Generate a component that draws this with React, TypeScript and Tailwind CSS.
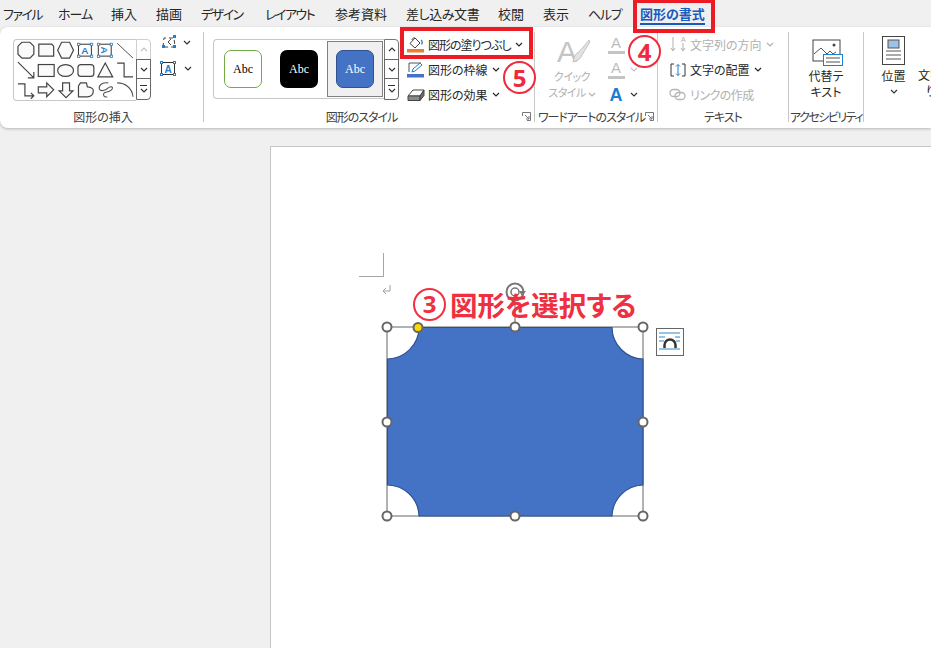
import type { ReactNode } from 'react';

const tabs = [
  { label: 'ファイル', className: 'w-[55px] tracking-[-1.5px]' },
  { label: 'ホーム', className: 'w-[53px] tracking-[-1px]' },
  { label: '挿入', className: 'w-[45px]' },
  { label: '描画', className: 'w-[45px]' },
  { label: 'デザイン', className: 'w-[64px] tracking-[-1.5px]' },
  { label: 'レイアウト', className: 'w-[70px] tracking-[-1.5px]' },
  { label: '参考資料', className: 'w-[71px]' },
  { label: '差し込み文書', className: 'w-[92px] tracking-[-0.4px]' },
  { label: '校閲', className: 'w-[45px]' },
  { label: '表示', className: 'w-[45px]' },
  { label: 'ヘルプ', className: 'w-[52px] tracking-[-1.3px]' },
];

function Chevron({ className = '' }: { className?: string }) {
  return (
    <svg width="8" height="5" viewBox="0 0 8 5" className={className}>
      <path d="M1 1l3 3 3-3" fill="none" stroke="currentColor" strokeWidth="1.2" />
    </svg>
  );
}

function GroupLabel({ children, launcher, className = '' }: { children: ReactNode; launcher?: boolean; className?: string }) {
  return (
    <div className="relative -mb-[4px] mt-auto h-[18px] shrink-0 whitespace-nowrap text-center text-[12px] leading-[18px] text-[#404040]">
      <div className={className}>{children}</div>
      {launcher && (
        <svg width="9" height="9" viewBox="0 0 9 9" className="absolute bottom-[5px] right-[3px] text-[#777777]">
          <path d="M.5 4V.5H8.5V8.5H5M3 3l4 4M7 4v3H4" fill="none" stroke="currentColor" />
        </svg>
      )}
    </div>
  );
}

function ShapeGallery() {
  const s = { fill: '#fafafa', stroke: '#444444', strokeWidth: 1.2 };
  const handle = '#1e7fd0';
  const boxes = [
    [78, 44, 13, 12],
    [98, 44, 13, 12],
  ];
  return (
    <svg width="123" height="60" viewBox="13 40 123 60">
      <polygon points="21,42 29,42 33,46 33,54 29,58 21,58 17,54 17,46" {...s} />
      <path d="M38 44h13l2 2v10H38z" {...s} />
      <polygon points="61,42 69,42 73,50 69,58 61,58 57,50" {...s} />
      {boxes.map(([x, y, w, h]) => (
        <g key={x}>
          <rect x={x} y={y} width={w} height={h} fill="none" stroke="#333333" />
          {[[x, y], [x + w, y], [x, y + h], [x + w, y + h]].map(([a, b]) => (
            <rect key={`${a}-${b}`} x={a - 1} y={b - 1} width="2.4" height="2.4" fill="white" stroke={handle} strokeWidth="0.8" />
          ))}
        </g>
      ))}
      <text x="84.5" y="54" textAnchor="middle" fontSize="10" fontWeight="700" fill={handle} fontFamily="Liberation Sans">A</text>
      <text x="105" y="54" textAnchor="middle" fontSize="10" fontWeight="700" fill={handle} fontFamily="Liberation Sans" transform="rotate(90 105 50)">A</text>
      <path d="M117 43l16 15" fill="none" stroke="#555555" />

      <path d="M17 62l16 16M33 72v6h-6" fill="none" stroke="#444444" strokeWidth="1.2" />
      <rect x="37.500" y="64.500" width="16" height="12" {...s} />
      <ellipse cx="65" cy="70.500" rx="8" ry="6" {...s} />
      <rect x="77.500" y="64.500" width="16" height="12" rx="3" {...s} />
      <polygon points="105,63 112.500,77 97.500,77" {...s} />
      <path d="M117 63h7v14h9" fill="none" stroke="#444444" strokeWidth="1.2" />

      <path d="M17 84h7v12h9M30 93l3 3-3 3" fill="none" stroke="#444444" strokeWidth="1.2" />
      <polygon points="37.500,87 46,87 46,83 53,90 46,97 46,93 37.500,93" {...s} />
      <polygon points="62,83 69,83 69,91 72.500,91 65.500,98 58.500,91 62,91" {...s} />
      <path d="M80 83h6l1 4c2 0 6 1 6 4 0 4-3 6-6 6h-9V86z" {...s} />
      <path d="M108 83c-5-1-10 2-9 6 1 3 6 2 9-1 3-2 5-1 4 1-1 3-6 3-8 4-2 2 0 5 3 4" fill="none" stroke="#555555" strokeWidth="1.1" />
      <path d="M117 83c8 0 15 5 16 14" fill="none" stroke="#555555" strokeWidth="1.1" />
    </svg>
  );
}

function Scroller({ upDisabled }: { upDisabled?: boolean }) {
  return (
    <div className="flex w-[15px] shrink-0 flex-col text-[#333333]">
      <div className={`flex h-[21px] items-center justify-center rounded-tr-[4px] border ${upDisabled ? 'border-[#cfcfcf] text-[#c4c4c4]' : 'border-[#777777]'}`}>
        <Chevron className="rotate-180" />
      </div>
      <div className="-mt-px flex h-[20px] items-center justify-center border border-[#666666]">
        <Chevron />
      </div>
      <div className="-mt-px flex h-[22px] flex-col items-center justify-center rounded-br-[4px] border border-[#666666]">
        <div className="mb-[2px] h-px w-[7px] bg-[#333333]" />
        <Chevron />
      </div>
    </div>
  );
}

function StyleCard({ className }: { className: string }) {
  return (
    <div className={`flex h-[38px] w-[38px] items-center justify-center rounded-[7px] font-['Liberation_Serif',serif] text-[12px] ${className}`}>
      Abc
    </div>
  );
}

function CommandRow({ icon, label, muted, labelClass = '', noChevron }: { icon: ReactNode; label: string; muted?: boolean; labelClass?: string; noChevron?: boolean }) {
  return (
    <div className={`flex h-[25px] shrink-0 items-center whitespace-nowrap text-[12px] ${muted ? 'text-[#b0b0b0]' : 'text-[#262626]'}`}>
      <div className="mr-[3px] flex w-[19px] justify-center">{icon}</div>
      <span className={labelClass}>{label}</span>
      {!noChevron && <Chevron className="ml-[4px]" />}
    </div>
  );
}

function LetterIcon({ kind }: { kind: 'plain' | 'outline' | 'blue' }) {
  return (
    <div className="flex h-[25px] items-center">
      <div className="flex w-[18px] flex-col items-center">
        <span
          className={`font-['Liberation_Sans',sans-serif] leading-[14px] ${
            kind === 'blue' ? 'text-[18px] font-bold text-[#1e7fd0]' : 'text-[15px] text-[#bdbdbd]'
          }`}
        >
          A
        </span>
        {kind !== 'blue' && <div className="mt-[1px] h-[3px] w-[17px] bg-[#c4c4c4]" />}
      </div>
      <Chevron className={`ml-[5px] ${kind === 'blue' ? 'text-[#333333]' : 'text-[#c4c4c4]'}`} />
    </div>
  );
}

function Ring({ digit, className }: { digit: string; className: string }) {
  return (
    <div
      className={`absolute flex h-[33px] w-[33px] items-center justify-center rounded-full border-[2.5px] border-[#ee2a3c] bg-white font-['Noto_Sans',sans-serif] text-[24px] font-bold leading-none text-[#ee2a3c] ${className}`}
    >
      {digit}
    </div>
  );
}

function SelectedShape() {
  const handles = [
    [387, 327],
    [515, 327],
    [643, 327],
    [387, 422],
    [643, 422],
    [387, 516],
    [515, 516],
    [643, 516],
  ];
  return (
    <svg width="330" height="250" viewBox="359 277 330 250">
      <path d="M390 285v6h-6M386 288l-3 3 3 3" fill="none" stroke="#a0a0a0" />
      <circle cx="515" cy="292" r="8.500" fill="none" stroke="#777777" strokeWidth="2" />
      <circle cx="515" cy="292" r="4" fill="none" stroke="#777777" strokeWidth="1.500" />
      <path d="M519 291h7l-4 5z" fill="#777777" />
      <path d="M515 300v27" stroke="#666666" />
      <rect x="387" y="327" width="256" height="189" fill="white" stroke="#666666" />
      <path
        d="M419 327.500H612A32 32 0 0 0 643 359V485A32 32 0 0 0 612 516H419A32 32 0 0 0 387.500 485V359A32 32 0 0 0 419 327.500Z"
        fill="#4472c4"
        stroke="#2f528f"
        strokeWidth="1.200"
      />
      {handles.map(([x, y]) => (
        <circle key={`${x}-${y}`} cx={x} cy={y} r="4.500" fill="white" stroke="#666666" strokeWidth="2" />
      ))}
      <circle cx="418" cy="327.500" r="4.500" fill="#ffd800" stroke="#666666" strokeWidth="2" />
      <rect x="656.500" y="328.500" width="27" height="27" fill="white" stroke="#666666" />
      <path d="M659 333h21M659 337h6M675 337h5M659 341h5M676 341h4M659 349h21" stroke="#2e86c9" />
      <path d="M664.500 348v-3a5.500 5.500 0 0 1 11 0v3" fill="none" stroke="#333333" strokeWidth="2.500" />
    </svg>
  );
}

export default function App() {
  return (
    <div className="relative flex h-[648px] w-[931px] flex-col overflow-hidden bg-[#f0f0f0] font-['Noto_Sans_CJK_JP','Noto_Sans',sans-serif] [font-feature-settings:'palt']">
      {/* Tabs */}
      <div className="flex h-[27px] shrink-0 items-center whitespace-nowrap pl-[3px] text-[13px] text-[#262626]">
        {tabs.map((t) => (
          <span key={t.label} className={t.className}>
            {t.label}
          </span>
        ))}
        <span className="relative font-bold text-[#185abd]">
          図形の書式
          <span className="absolute inset-x-0 bottom-[-2px] h-[2px] bg-[#185abd]" />
        </span>
      </div>

      {/* Ribbon */}
      <div className="flex h-[101px] shrink-0 items-start rounded-l-[8px] bg-white pt-[5px] shadow-[0_1px_3px_rgba(0,0,0,0.25)]">
        {/* 図形の挿入 */}
        <div className="flex h-[90px] w-[204px] shrink-0 flex-col border-r border-[#c8c8c8] pl-[13px]">
          <div className="mt-[7px] flex items-start">
            <div className="flex h-[62px] w-[123px] items-center rounded-l-[4px] border-y border-l border-[#c8c8c8]">
              <ShapeGallery />
            </div>
            <Scroller upDisabled />
            <div className="ml-[9px] mt-[-5px] flex flex-col gap-[10px] text-[#333333]">
              <div className="flex h-[16px] items-center gap-[6px]">
                <svg width="17" height="14" viewBox="0 0 17 14">
                  <path d="M3 12l1-9h10l1 9z" fill="none" stroke="#444444" strokeDasharray="4 3" />
                  <path d="M11 4l-3 3 3 3" fill="none" stroke="#444444" />
                  <rect x="2" y="10" width="3" height="3" fill="#1e7fd0" />
                  <rect x="13" y="0" width="3" height="3" fill="#1e7fd0" />
                  <rect x="13" y="10" width="3" height="3" fill="#1e7fd0" />
                </svg>
                <Chevron />
              </div>
              <div className="flex h-[16px] items-center gap-[8px]">
                <svg width="16" height="15" viewBox="0 0 16 15">
                  <rect x="1.500" y="1.500" width="13" height="12" fill="none" stroke="#333333" />
                  <text x="8" y="12" textAnchor="middle" fontSize="10" fontWeight="700" fill="#1e7fd0" fontFamily="Liberation Sans">A</text>
                  {[[0, 0], [13, 0], [0, 12], [13, 12]].map(([x, y]) => (
                    <rect key={`${x}-${y}`} x={x + 0.5} y={y + 0.5} width="2" height="2" fill="white" stroke="#1e7fd0" />
                  ))}
                </svg>
                <Chevron />
              </div>
            </div>
          </div>
          <GroupLabel className="pr-[10px]">図形の挿入</GroupLabel>
        </div>

        {/* 図形のスタイル */}
        <div className="flex h-[90px] w-[331px] shrink-0 flex-col border-r border-[#c8c8c8] pl-[9px]">
          <div className="flex items-start">
            <div className="mt-[7px] flex items-start">
              <div className="flex h-[60px] w-[171px] items-center gap-[18px] rounded-l-[4px] border-y border-l border-[#c8c8c8] pl-[10px]">
                <StyleCard className="border border-[#70ad47] bg-white text-black" />
                <StyleCard className="bg-black text-white" />
                <div className="-ml-[9px] flex h-[56px] w-[56px] items-center justify-center border border-[#808080] bg-[#f0f0f0]">
                  <StyleCard className="border border-[#2f528f] bg-[#4472c4] text-white" />
                </div>
              </div>
              <Scroller />
            </div>
            <div className="ml-[7px] flex flex-col">
              <CommandRow
                label="図形の塗りつぶし"
                labelClass="tracking-[-1px]"
                icon={
                  <svg width="17" height="16" viewBox="0 0 17 16">
                    <path d="M3 6.500L8 1l5 5-5 5z" fill="white" stroke="#444444" />
                    <path d="M5 3c0-2 3-3 4-1" fill="none" stroke="#444444" />
                    <path d="M14 3c1.500 1 1.500 3 .5 4.500" fill="none" stroke="#1e7fd0" strokeWidth="1.300" />
                    <rect y="12" width="17" height="3.500" fill="#ed7d31" />
                  </svg>
                }
              />
              <CommandRow
                label="図形の枠線"
                icon={
                  <svg width="17" height="16" viewBox="0 0 17 16">
                    <path d="M2 10V1h12" fill="none" stroke="#555555" />
                    <path d="M5 10l1-3 7-6 2 2-7 6z" fill="white" stroke="#1e7fd0" />
                    <rect y="12" width="17" height="3.500" fill="#4472c4" />
                  </svg>
                }
              />
              <CommandRow
                label="図形の効果"
                icon={
                  <svg width="18" height="14" viewBox="0 0 18 14">
                    <path d="M1 8l5-6h11l-4 6z" fill="white" stroke="#444444" />
                    <path d="M1 8v4.500h12V8z" fill="#8a8a8a" stroke="#444444" />
                    <path d="M13 8v4.500l4-5V2z" fill="#6f6f6f" stroke="#444444" />
                  </svg>
                }
              />
            </div>
          </div>
          <GroupLabel launcher className="pr-[24px] tracking-[-1px]">図形のスタイル</GroupLabel>
        </div>

        {/* ワードアートのスタイル */}
        <div className="flex h-[90px] w-[123px] shrink-0 flex-col border-r border-[#c8c8c8]">
          <div className="flex items-start pl-[10px] text-[#b0b0b0]">
            <div className="flex w-[54px] flex-col items-center">
              <svg width="38" height="30" viewBox="0 0 38 30" className="mt-[5px]">
                <text x="14" y="25" textAnchor="middle" fontSize="30" fill="#c4c4c4" fontFamily="Liberation Sans">A</text>
                <path d="M36 3L26 15c-3 1-5 4-6 10 4-1 8-3 9-7L37 5z" fill="#e2e2e2" stroke="#b8b8b8" strokeWidth="0.8" />
              </svg>
              <div className="mt-[1px] text-center text-[11px] leading-[16px] tracking-[-0.5px]">
                クイック
                <br />
                スタイル <Chevron className="inline align-middle" />
              </div>
            </div>
            <div className="ml-[8px] flex flex-col">
              <LetterIcon kind="plain" />
              <LetterIcon kind="outline" />
              <LetterIcon kind="blue" />
            </div>
          </div>
          <GroupLabel launcher className="pl-[3px] pr-[18px] tracking-[-1px]">ワードアートのスタイル</GroupLabel>
        </div>

        {/* テキスト */}
        <div className="flex h-[90px] w-[131px] shrink-0 flex-col border-r border-[#c8c8c8] pl-[10px]">
          <CommandRow
            muted
            label="文字列の方向"
            icon={
              <svg width="16" height="17" viewBox="0 0 16 17">
                <path d="M3 1v13M1 12l2 3 2-3M13 7v7M11 12l2 3 2-3" fill="none" stroke="#b0b0b0" />
                <text x="11" y="6" fontSize="7" fill="#b0b0b0" fontFamily="Liberation Sans">A</text>
              </svg>
            }
          />
          <CommandRow
            label="文字の配置"
            icon={
              <svg width="16" height="14" viewBox="0 0 16 14">
                <path d="M4 1H1v12h3M12 1h3v12h-3" fill="none" stroke="#333333" />
                <path d="M8 1.500v11M6 3.500l2-2 2 2M6 10.500l2 2 2-2" fill="none" stroke="#1e7fd0" />
              </svg>
            }
          />
          <CommandRow
            muted
            noChevron
            label="リンクの作成"
            labelClass="tracking-[-0.5px]"
            icon={
              <svg width="17" height="13" viewBox="0 0 17 13">
                <rect x="1" y="1.500" width="10" height="7" rx="3.500" fill="none" stroke="#b5b5b5" strokeWidth="1.300" />
                <rect x="6" y="4.500" width="10" height="7" rx="3.500" fill="none" stroke="#b5b5b5" strokeWidth="1.300" />
              </svg>
            }
          />
          <GroupLabel className="pr-[10px] tracking-[-1px]">テキスト</GroupLabel>
        </div>

        {/* アクセシビリティ */}
        <div className="flex h-[90px] w-[75px] shrink-0 flex-col items-center border-r border-[#c8c8c8]">
          <svg width="31" height="28" viewBox="0 0 31 28" className="ml-[2px] mt-[7px]">
            <rect x="1" y="1" width="27" height="21" fill="white" stroke="#444444" />
            <path d="M2 15l7-6 6 6 3-3 3 3 3-2" fill="none" stroke="#555555" />
            <circle cx="22" cy="6" r="1.500" fill="#444444" />
            <rect x="11.500" y="15.500" width="19" height="11" fill="white" stroke="#1e7fd0" />
            <path d="M14 19h14M14 23h14" stroke="#555555" />
          </svg>
          <div className="mt-[1px] text-center text-[12px] leading-[16px] text-[#262626]">
            代替テ
            <br />
            キスト
          </div>
          <GroupLabel className="tracking-[-1.5px]">アクセシビリティ</GroupLabel>
        </div>

        {/* 配置 */}
        <div className="flex h-[90px] w-[52px] shrink-0 flex-col items-center pl-[7px]">
          <svg width="23" height="29" viewBox="0 0 23 29" className="mt-[4px]">
            <rect x=".5" y=".5" width="22" height="28" fill="white" stroke="#444444" />
            <rect x="6" y="4" width="11" height="8" fill="#9cc3e5" stroke="#555555" />
            <path d="M4 15h15M4 19h15M4 23h15" stroke="#555555" />
          </svg>
          <div className="mt-[3px] text-[12px] leading-[16px] text-[#262626]">位置</div>
          <Chevron className="mt-[5px] text-[#333333]" />
        </div>
        <div className="w-[30px] shrink-0 overflow-hidden whitespace-nowrap pl-[2px] pt-[35px] text-[12px] leading-[16px] text-[#262626]">
          文字列の折
          <br />
          <span className="ml-[8px]">り返し</span>
        </div>
      </div>

      {/* Page */}
      <div className="relative ml-[270px] mt-[18px] flex-1 border-l border-t border-[#c6c6c6] bg-white pl-[88px] pt-[106px]">
        <div className="h-[24px] w-[25px] border-b border-r border-[#a6a6a6]" />
        <SelectedShape />
        <div className="absolute left-[142px] top-[139px] flex items-center whitespace-nowrap">
          <div className="flex h-[33px] w-[33px] items-center justify-center rounded-full border-[2.5px] border-[#ee3040] font-['Noto_Sans',sans-serif] text-[24px] font-bold leading-none text-[#ee3040]">
            3
          </div>
          <span className="ml-[4px] text-[27.5px] font-bold leading-[36px] text-[#ee3040]">図形を選択する</span>
        </div>
      </div>

      {/* Annotations */}
      <div className="absolute left-[633px] top-[-1px] h-[34px] w-[82px] border-4 border-[#ed1c24]" />
      <div className="absolute left-[400px] top-[27px] h-[32px] w-[133px] border-4 border-[#ed1c24]" />
      <Ring digit="4" className="left-[628px] top-[35px]" />
      <Ring digit="5" className="left-[503px] top-[61px]" />
    </div>
  );
}
